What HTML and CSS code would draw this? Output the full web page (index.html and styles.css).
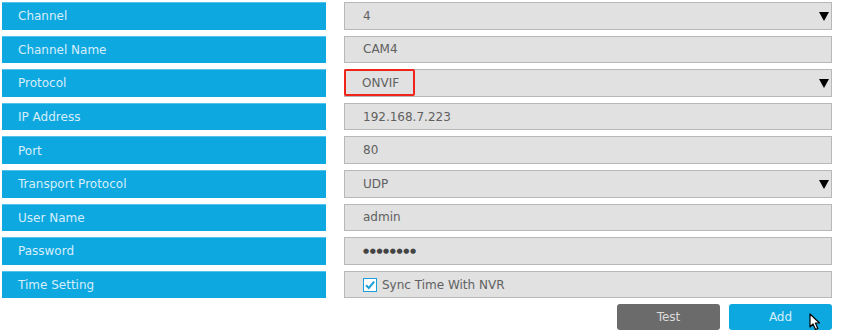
FILE: index.html
```html
<!DOCTYPE html>
<html lang="en">

<head>
    <meta charset="UTF-8">
    <title>Add Camera</title>
    <link rel="stylesheet" href="styles.css">
</head>

<body>
    <div class="form">
        <div class="row">
            <div class="label">Channel</div>
            <div class="field select"><span>4</span><span class="arrow"></span></div>
        </div>
        <div class="row">
            <div class="label">Channel Name</div>
            <div class="field"><span>CAM4</span></div>
        </div>
        <div class="row">
            <div class="label">Protocol</div>
            <div class="field select"><span class="mark">ONVIF</span><span class="arrow"></span></div>
        </div>
        <div class="row">
            <div class="label">IP Address</div>
            <div class="field"><span>192.168.7.223</span></div>
        </div>
        <div class="row">
            <div class="label">Port</div>
            <div class="field"><span>80</span></div>
        </div>
        <div class="row">
            <div class="label">Transport Protocol</div>
            <div class="field select"><span>UDP</span><span class="arrow"></span></div>
        </div>
        <div class="row">
            <div class="label">User Name</div>
            <div class="field"><span>admin</span></div>
        </div>
        <div class="row">
            <div class="label">Password</div>
            <div class="field"><span class="dots">&#9679;&#9679;&#9679;&#9679;&#9679;&#9679;&#9679;&#9679;</span></div>
        </div>
        <div class="row">
            <div class="label">Time Setting</div>
            <div class="field check">
                <span class="box">
                    <svg width="12" height="12" viewBox="0 0 12 12"><path d="M2 6.2 L4.8 9 L10.2 2.6" fill="none" stroke="#1a9fd8" stroke-width="2"/></svg>
                </span>
                <span>Sync Time With NVR</span>
            </div>
        </div>
        <div class="buttons">
            <div class="btn test">Test</div>
            <div class="btn add">Add
                <svg class="cursor" width="14" height="18" viewBox="0 0 14 18"><path d="M1 1 L1 14 L4 11 L6.5 16.5 L8.8 15.5 L6.4 10 L10.5 10 Z" fill="#fff" stroke="#000" stroke-width="1.2" stroke-linejoin="round"/></svg>
            </div>
        </div>
    </div>
</body>
</html>
```

FILE: styles.css
```css
* {
    padding: 0;
    margin: 0;
    box-sizing: border-box;
}

body {
    background: #fff;
    font-family: "DejaVu Sans", sans-serif;
    font-size: 12px;
}

.form {
    width: 832px;
    padding: 2px 0 0 2px;
}

.row {
    display: flex;
    height: 27.6px;
    margin-bottom: 6px;
}

.label {
    width: 324px;
    background-color: #0ea8e1;
    border-top: 1px solid #55c2ec;
    color: #d6eef9;
    padding-left: 16px;
    display: flex;
    align-items: center;
}

.field {
    margin-left: 18px;
    flex: 1;
    background-color: #e1e1e1;
    border: 1px solid #b8b8b8;
    color: #606060;
    padding-left: 18px;
    display: flex;
    align-items: center;
    position: relative;
}

.select .arrow {
    position: absolute;
    right: 2px;
    top: 9px;
    width: 0;
    height: 0;
    border-left: 5px solid transparent;
    border-right: 5px solid transparent;
    border-top: 9px solid #000;
}

.mark {
    position: absolute;
    left: -1px;
    top: -1px;
    width: 71px;
    height: 27px;
    border: 2px solid #f0241a;
    border-radius: 2px;
    padding-left: 16px;
    display: flex;
    align-items: center;
}

.dots {
    font-size: 7px;
    letter-spacing: 0.6px;
    color: #444;
}

.check .box {
    width: 14px;
    height: 14px;
    background: #fff;
    border: 1px solid #1a9fd8;
    margin-right: 5px;
    display: flex;
    align-items: center;
    justify-content: center;
}

.buttons {
    display: flex;
    justify-content: flex-end;
    gap: 9px;
    margin-top: 6px;
}

.btn {
    width: 103px;
    height: 26px;
    border-radius: 3px;
    color: #dcdcdc;
    display: flex;
    align-items: center;
    justify-content: center;
    position: relative;
}

.test {
    background-color: #6b6b6b;
}

.add {
    background-color: #0ea8e1;
    color: #d6eef9;
}

.cursor {
    position: absolute;
    left: 80px;
    top: 9px;
}
```
